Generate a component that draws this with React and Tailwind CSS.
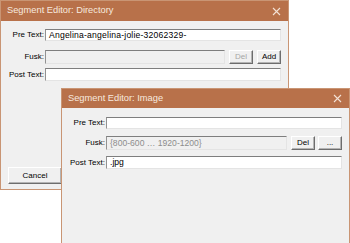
import React from "react";

function CloseX() {
  return (
    <svg width="9" height="9" viewBox="0 0 9 9" className="shrink-0">
      <path d="M1 1 L8 8 M8 1 L1 8" stroke="#f3e2d6" strokeWidth="1.1" />
    </svg>
  );
}

function Field({ children, disabled, className = "" }) {
  return (
    <div
      className={
        "flex items-center h-full border border-t-[#7e7e7e] border-l-[#929292] border-r-[#e4e4e4] border-b-[#e4e4e4] pl-[3px] overflow-hidden whitespace-nowrap text-[8.6px] " +
        (disabled ? "bg-[#f0f0f0] text-[#8d8d8d] " : "bg-white text-black ") +
        className
      }
    >
      {children}
    </div>
  );
}

function Btn({ children, disabled, className = "" }) {
  return (
    <div
      className={
        "flex items-center justify-center h-full bg-[#f0f0f0] border border-t-white border-l-white border-r-[#6d6d6d] border-b-[#6d6d6d] shadow-[inset_-1px_-1px_0_#b4b4b4] " +
        (disabled ? "text-[#a6a6a6] " : "text-black ") +
        className
      }
    >
      {children}
    </div>
  );
}

function Row({ label, labelW, className, children }) {
  return (
    <div className={"flex items-stretch " + className}>
      <div className="shrink-0 flex items-center justify-end" style={{ width: labelW }}>
        {label}
      </div>
      <div className="flex-1 flex gap-[4px] ml-[1px]">{children}</div>
    </div>
  );
}

function Title({ text, h }) {
  return (
    <div className={"flex items-center justify-between bg-[#b8714a] pl-[6px] pr-[7px] text-[#f7e9df] text-[9.3px] " + h}>
      <span>{text}</span>
      <CloseX />
    </div>
  );
}

export default function App() {
  return (
    <div
      className="relative w-[350px] h-[243px] bg-white overflow-hidden text-[8px] leading-none"
      style={{ fontFamily: '"Liberation Sans", Arial, sans-serif' }}
    >
      {/* Directory window */}
      <div className="absolute left-0 top-0 w-[289px] h-[190px] border border-[#c99574] bg-[#f0f0f0] flex flex-col">
        <Title text="Segment Editor: Directory" h="h-[20px]" />
        <div className="flex-1 flex flex-col pr-[7px]">
          <Row label="Pre Text:" labelW={43} className="mt-[8px] h-[12px]">
            <Field className="flex-1 tracking-[0.2px]">Angelina-angelina-jolie-32062329-</Field>
          </Row>
          <Row label="Fusk:" labelW={43} className="mt-[9px] h-[14px]">
            <Field disabled className="flex-1 h-[13px]" />
            <Btn disabled className="w-[24px]">Del</Btn>
            <Btn className="w-[24px]">Add</Btn>
          </Row>
          <Row label="Post Text:" labelW={43} className="mt-[4px] h-[13px]">
            <Field className="flex-1" />
          </Row>
          <div className="mt-auto mb-[5px] ml-[7px] w-[54px] h-[17px]">
            <Btn>Cancel</Btn>
          </div>
        </div>
      </div>

      {/* Image window */}
      <div className="absolute left-[61px] top-[88px] w-[289px] h-[170px] border border-[#c99574] bg-[#f0f0f0] flex flex-col">
        <Title text="Segment Editor: Image" h="h-[19px]" />
        <div className="flex-1 flex flex-col pr-[7px]">
          <Row label="Pre Text:" labelW={43} className="mt-[9px] h-[12px]">
            <Field className="flex-1" />
          </Row>
          <Row label="Fusk:" labelW={43} className="mt-[7px] h-[14px]">
            <Field disabled className="flex-1 h-[13px]">{"{800-600 … 1920-1200}"}</Field>
            <Btn className="w-[24px]">Del</Btn>
            <Btn className="w-[24px] -ml-[1px]">...</Btn>
          </Row>
          <Row label="Post Text:" labelW={43} className="mt-[6px] h-[13px]">
            <Field className="flex-1">.jpg</Field>
          </Row>
        </div>
      </div>
    </div>
  );
}
